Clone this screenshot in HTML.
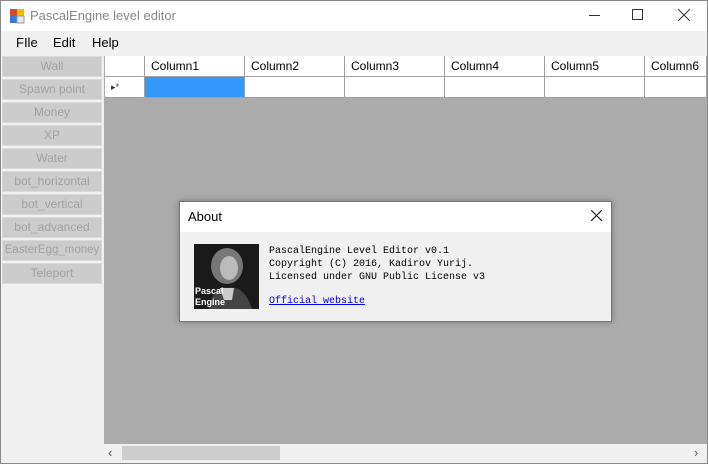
<!DOCTYPE html>
<html><head><style>
*{margin:0;padding:0;box-sizing:border-box}
body{width:708px;height:464px;position:relative;background:#f0f0f0;font-family:"Liberation Sans",sans-serif;font-size:12px;overflow:hidden}
.a{position:absolute}
.title{left:0;top:0;width:708px;height:31px;background:#fff}
.btn{position:absolute;left:2px;width:100px;height:21px;background:#cccccc;border:1px solid #dadada;color:#a2a2a2;text-align:center;line-height:19px;font-size:12px}
.grid{left:104px;top:56px;width:603px;height:389px;background:#ababab}
.cell{position:absolute;height:21px;background:#fff;border-right:1px solid #a0a0a0;border-bottom:1px solid #a0a0a0;padding-left:6px;line-height:20px;font-size:12px;color:#000}
.mono{font-family:"Liberation Mono",monospace;font-size:10px;line-height:13px;color:#000}
</style></head><body>
<div class="a title">
 <svg class="a" style="left:9px;top:8px" width="16" height="16"><rect x="1" y="1" width="7" height="7" fill="#d94a2a"/><rect x="8" y="1" width="7" height="7" fill="#f0b800"/><rect x="1" y="8" width="7" height="7" fill="#3a7bd5"/><rect x="8" y="8" width="7" height="7" fill="#e8e8e8" stroke="#999"/></svg>
 <div class="a" style="left:30px;top:8px;font-size:13px;color:#888">PascalEngine level editor</div>
 <div class="a" style="left:589px;top:15px;width:11px;height:1px;background:#333"></div>
 <div class="a" style="left:632px;top:9px;width:11px;height:11px;border:1px solid #333"></div>
 <svg class="a" style="left:678px;top:9px" width="12" height="12"><path d="M0 0L12 12M12 0L0 12" stroke="#333" stroke-width="1"/></svg>
</div>
<div class="a" style="left:16px;top:35px;font-size:13px">FIle</div>
<div class="a" style="left:53px;top:35px;font-size:13px">Edit</div>
<div class="a" style="left:92px;top:35px;font-size:13px">Help</div>
<div class="btn" style="top:56px">Wall</div>
<div class="btn" style="top:79px">Spawn point</div>
<div class="btn" style="top:102px">Money</div>
<div class="btn" style="top:125px">XP</div>
<div class="btn" style="top:148px">Water</div>
<div class="btn" style="top:171px">bot_horizontal</div>
<div class="btn" style="top:194px">bot_vertical</div>
<div class="btn" style="top:217px">bot_advanced</div>
<div class="btn" style="top:240px;font-size:11.5px">EasterEgg_money</div>
<div class="btn" style="top:263px">Teleport</div>
<div class="a grid">
 <div class="cell" style="left:1px;top:0px;width:40px"></div>
 <div class="cell" style="left:41px;top:0px;width:100px">Column1</div>
 <div class="cell" style="left:141px;top:0px;width:100px">Column2</div>
 <div class="cell" style="left:241px;top:0px;width:100px">Column3</div>
 <div class="cell" style="left:341px;top:0px;width:100px">Column4</div>
 <div class="cell" style="left:441px;top:0px;width:100px">Column5</div>
 <div class="cell" style="left:541px;top:0px;width:62px">Column6</div>
 <div class="cell" style="left:1px;top:21px;width:40px;font-size:9px;color:#333">▸*</div>
 <div class="cell" style="left:41px;top:21px;width:100px;background:#3399ff"></div>
 <div class="cell" style="left:141px;top:21px;width:100px"></div>
 <div class="cell" style="left:241px;top:21px;width:100px"></div>
 <div class="cell" style="left:341px;top:21px;width:100px"></div>
 <div class="cell" style="left:441px;top:21px;width:100px"></div>
 <div class="cell" style="left:541px;top:21px;width:62px"></div>
</div>
<div class="a" style="left:104px;top:444px;width:603px;height:18px;background:#f0f0f0">
 <div class="a" style="left:18px;top:2px;width:158px;height:14px;background:#cdcdcd"></div>
 <div class="a" style="left:4px;top:1px;font-size:13px;color:#606060">‹</div>
 <div class="a" style="left:590px;top:1px;font-size:13px;color:#606060">›</div>
</div>
<div class="a" style="left:0;top:0;width:708px;height:464px;border:1px solid #8a8a8a;pointer-events:none"></div>
<div class="a" style="left:179px;top:201px;width:433px;height:121px;border:1px solid #4a80b5;background:#f0f0f0;box-shadow:0 0 6px rgba(0,0,0,.3)">
 <div class="a" style="left:0;top:0;width:431px;height:30px;background:#fff"></div>
 <div class="a" style="left:8px;top:7px;font-size:13px">About</div>
 <svg class="a" style="left:411px;top:8px" width="11" height="11"><path d="M0 0L11 11M11 0L0 11" stroke="#222" stroke-width="1.2"/></svg>
 <svg class="a" style="left:14px;top:42px" width="65" height="65"><rect width="65" height="65" fill="#1a1a1a"/><ellipse cx="33" cy="22" rx="16" ry="18" fill="#777"/><ellipse cx="35" cy="24" rx="9" ry="12" fill="#bbb"/><path d="M15 65Q20 40 33 44Q50 40 58 65Z" fill="#444"/><path d="M26 44L40 44L38 56L30 56Z" fill="#ccc"/></svg>
 <div class="a" style="left:15px;top:84px;font-size:9px;font-weight:bold;color:#fff;line-height:11px">Pascal<br>Engine</div>
 <div class="a mono" style="left:89px;top:43px">PascalEngine Level Editor v0.1<br>Copyright (C) 2016, Kadirov Yurij.<br>Licensed under GNU Public License v3</div>
 <div class="a mono" style="left:89px;top:93px;color:#0000ee;text-decoration:underline">Official website</div>
</div>
</body></html>
